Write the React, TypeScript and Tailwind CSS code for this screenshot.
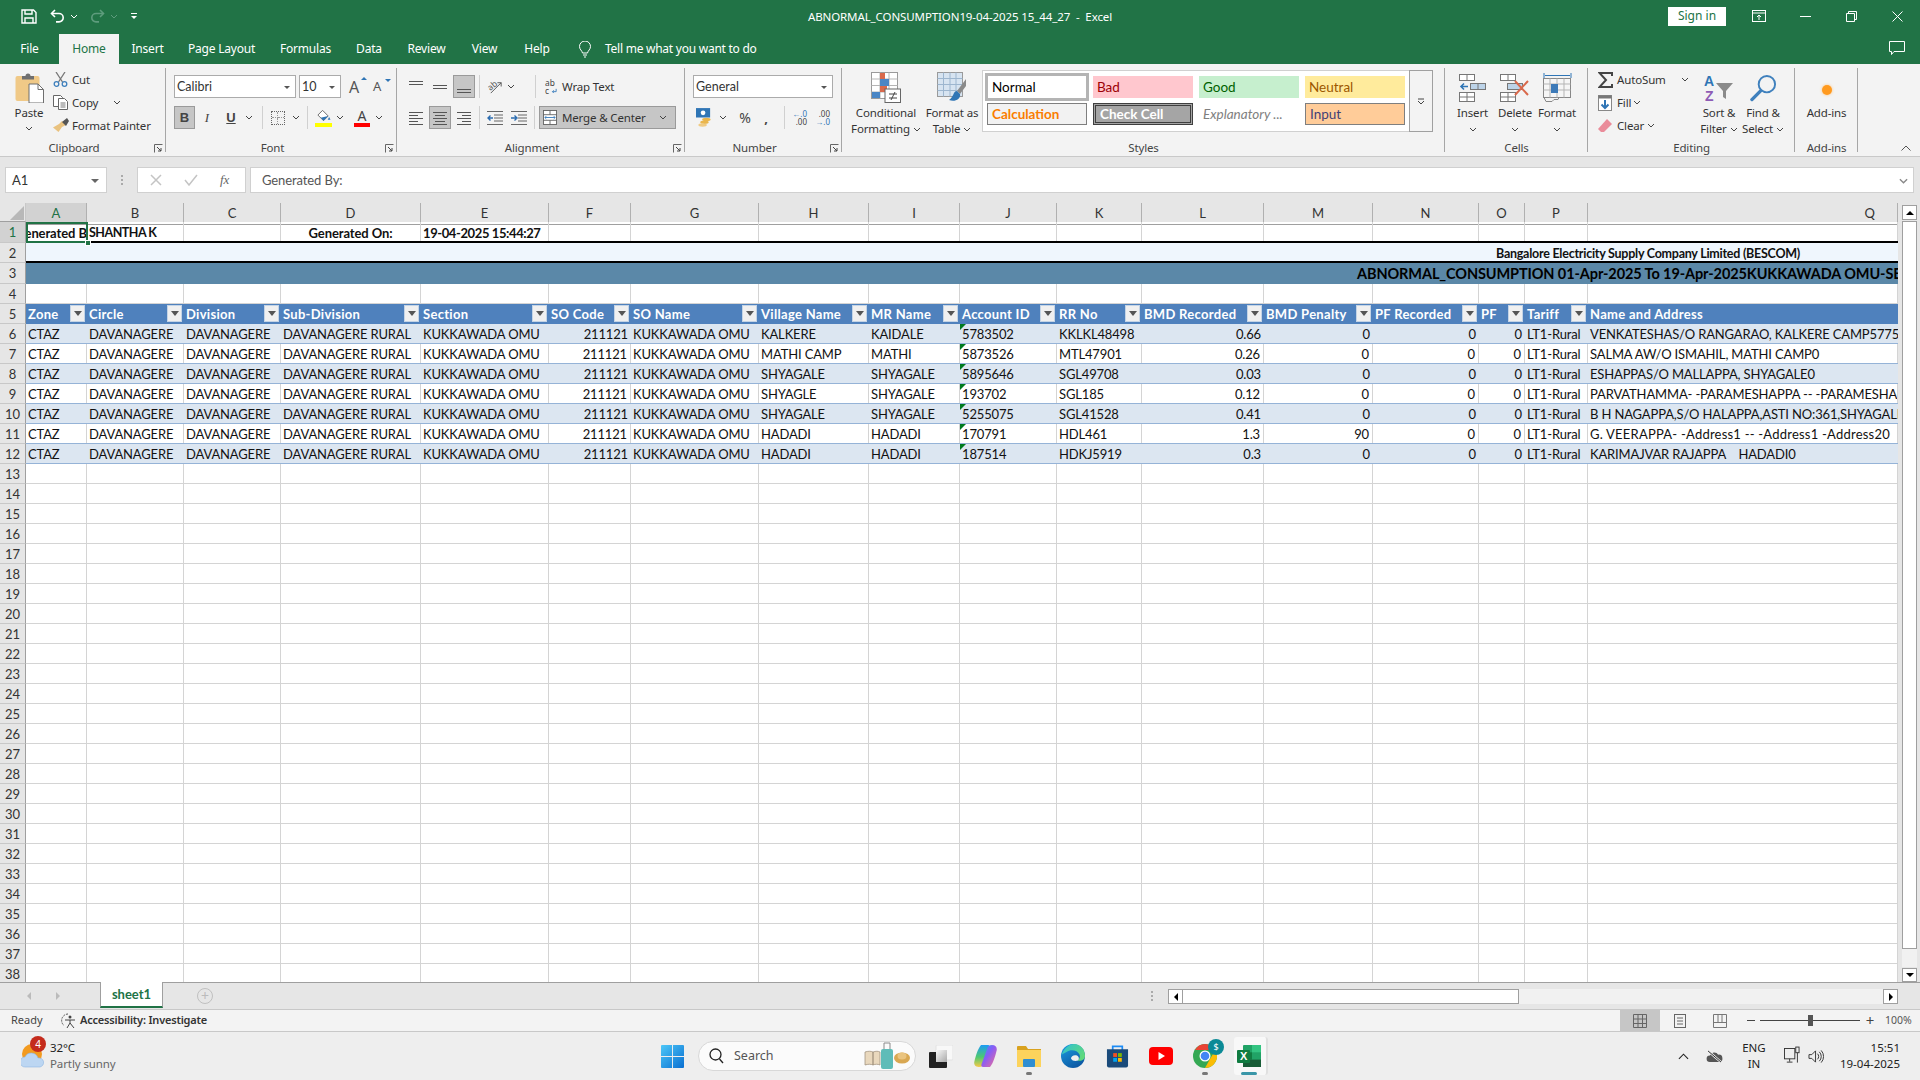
import React from "react";

const colW = "grid-cols-[61px_97px_97px_140px_128px_82px_128px_110px_91px_97px_85px_122px_109px_106px_46px_63px_310px]";
const letters = "ABCDEFGHIJKLMNOPQ".split("");
const heads = ["Zone","Circle","Division","Sub-Division","Section","SO Code","SO Name","Village Name","MR Name","Account ID","RR No","BMD Recorded","BMD Penalty","PF Recorded","PF","Tariff","Name and Address"];
const rightCols = [5, 11, 12, 13, 14];
const base = ["CTAZ","DAVANAGERE","DAVANAGERE","DAVANAGERE RURAL","KUKKAWADA OMU","211121","KUKKAWADA OMU"];
const data: string[][] = [
  [...base,"KALKERE","KAIDALE","5783502","KKLKL48498","0.66","0","0","0","LT1-Rural","VENKATESHAS/O RANGARAO, KALKERE CAMP5775"],
  [...base,"MATHI CAMP","MATHI","5873526","MTL47901","0.26","0","0","0","LT1-Rural","SALMA AW/O ISMAHIL, MATHI CAMP0"],
  [...base,"SHYAGALE","SHYAGALE","5895646","SGL49708","0.03","0","0","0","LT1-Rural","ESHAPPAS/O MALLAPPA, SHYAGALE0"],
  [...base,"SHYAGLE","SHYAGALE","193702","SGL185","0.12","0","0","0","LT1-Rural","PARVATHAMMA- -PARAMESHAPPA -- -PARAMESHAPPA"],
  [...base,"SHYAGALE","SHYAGALE","5255075","SGL41528","0.41","0","0","0","LT1-Rural","B H NAGAPPA,S/O HALAPPA,ASTI NO:361,SHYAGALE"],
  [...base,"HADADI","HADADI","170791","HDL461","1.3","90","0","0","LT1-Rural","G. VEERAPPA- -Address1 -- -Address1 -Address20"],
  [...base,"HADADI","HADADI","187514","HDKJ5919","0.3","0","0","0","LT1-Rural","KARIMAJVAR RAJAPPA    HADADI0"],
];
const cellFont = "[font-family:Lato,'Liberation_Sans',sans-serif] text-[13px]";
const uiText = "text-[11.5px] tracking-[-0.15px]";

function Chev({ className = "", color = "#444" }: { className?: string; color?: string }) {
  return (
    <svg viewBox="0 0 8 5" className={"w-[8px] h-[5px] shrink-0 " + className}>
      <path d="M1 1l3 3 3-3" fill="none" stroke={color} strokeWidth="1" />
    </svg>
  );
}
function Launcher() {
  return (
    <svg viewBox="0 0 9 9" className="w-[9px] h-[9px]">
      <path d="M.5 8.500v-8h8" fill="none" stroke="#666" />
      <path d="M3 3l4 4M7 4v3H4" fill="none" stroke="#444" />
    </svg>
  );
}
function Group({ w, label, launcher, children }: { w: string; label: string; launcher?: boolean; children: React.ReactNode }) {
  return (
    <div className={"relative flex flex-col h-full shrink-0 " + w}>
      <div className="h-[73px] shrink-0">{children}</div>
      <div className={"text-center text-[#444] leading-[14px] " + uiText + (launcher ? " pr-[18px]" : "")}>{label}</div>
      {launcher && <div className="absolute right-[3px] top-[76px]"><Launcher /></div>}
      <div className="absolute right-0 top-0 bottom-0 w-px bg-[#a6a6a6]" />
    </div>
  );
}
function Sep({ className = "" }: { className?: string }) {
  return <div className={"w-px h-[23px] bg-[#d0d0d0] shrink-0 " + className} />;
}
function Lines({ kind, className = "" }: { kind: string; className?: string }) {
  const p: Record<string, string> = {
    top: "M2 3.500h14M2 6.500h14",
    mid: "M2 7.500h14M2 10.500h14",
    bot: "M2 11.500h14M2 14.500h14",
    left: "M2 3.500h14M2 6.500h9M2 9.500h14M2 12.500h9M2 15.500h14",
    center: "M2 3.500h14M4 6.500h10M2 9.500h14M4 12.500h10M2 15.500h14",
    right: "M2 3.500h14M7 6.500h9M2 9.500h14M7 12.500h9M2 15.500h14",
  };
  return (
    <svg viewBox="0 0 18 18" className={"w-[18px] h-[18px] " + className}>
      <path d={p[kind]} stroke="#555" fill="none" />
    </svg>
  );
}
function SmallRow({ icon, text, chev, chevClass = "ml-[5px]" }: { icon: React.ReactNode; text: string; chev?: boolean; chevClass?: string }) {
  return (
    <div className="flex items-center h-[23px]">
      <div className="w-[19px] flex justify-start shrink-0">{icon}</div>
      <span className={"text-[#333] whitespace-nowrap " + uiText}>{text}</span>
      {chev && <Chev className={chevClass} />}
    </div>
  );
}
function BigBtn({ w, icon, l1, l2, chev = true }: { w: string; icon: React.ReactNode; l1: string; l2?: string; chev?: boolean }) {
  return (
    <div className={"flex flex-col items-center shrink-0 " + w}>
      <div className="flex items-center justify-center h-[31px]">{icon}</div>
      <div className={"text-[#333] leading-[16px] mt-[2px] whitespace-nowrap " + uiText}>{l1}</div>
      {l2 ? (
        <div className={"flex items-center text-[#333] leading-[16px] whitespace-nowrap " + uiText}>{l2}{chev && <Chev className="ml-[3px]" />}</div>
      ) : chev ? (
        <div className="h-[16px] flex items-center"><Chev /></div>
      ) : null}
    </div>
  );
}
function Tab({ w, text, active }: { w: string; text: string; active?: boolean }) {
  return (
    <div className={"h-[30px] flex items-center justify-center text-[12px] tracking-[-0.2px] shrink-0 " + w + (active ? " bg-[#f3f3f3] text-[#217346]" : " text-white")}>
      {text}
    </div>
  );
}
function StyleBox({ className, text }: { className: string; text: string }) {
  return <div className={"flex items-center pl-[4px] text-[13.5px] [font-family:Lato,sans-serif] shrink-0 " + className}>{text}</div>;
}
function RowHead({ n, active }: { n: number; active?: boolean }) {
  return (
    <div className={"w-[26px] h-full shrink-0 flex items-center justify-center pt-[2px] border-r border-r-[#9f9f9f] border-b border-b-[#c8c8c8] [font-family:Lato,sans-serif] text-[13px] " + (active ? "bg-[#d2d2d2] text-[#217346]" : "bg-[#e6e6e6] text-[#333]")}>{n}</div>
  );
}
function EmptyCells() {
  return (
    <div className={"grid w-[1872px] h-full " + colW}>
      {letters.map((l) => <div key={l} className="border-r border-b border-[#d4d4d4] h-full" />)}
    </div>
  );
}

/* ---- Icons ---- */
const SaveIcon = () => (
  <svg viewBox="0 0 16 15" className="w-[16px] h-[15px]">
    <path d="M1 1h11.500L15 3.500V14H1z" fill="none" stroke="#fff" strokeWidth="1.400" />
    <path d="M4 1v4h7V1M4 14V9h8v5" fill="none" stroke="#fff" strokeWidth="1.400" />
  </svg>
);
const UndoIcon = () => (
  <svg viewBox="0 0 16 14" className="w-[16px] h-[14px]">
    <path d="M5 1L1.500 4.500 5 8" fill="none" stroke="#fff" strokeWidth="1.600" />
    <path d="M2 4.500h7a4.200 4.200 0 010 8.400H6" fill="none" stroke="#fff" strokeWidth="1.600" />
  </svg>
);
const RedoIcon = () => (
  <svg viewBox="0 0 16 14" className="w-[16px] h-[14px]">
    <path d="M11 1l3.500 3.500L11 8" fill="none" stroke="#5e9c7d" strokeWidth="1.600" />
    <path d="M14 4.500H7a4.200 4.200 0 000 8.400h3" fill="none" stroke="#5e9c7d" strokeWidth="1.600" />
  </svg>
);
const PasteIcon = () => (
  <svg viewBox="0 0 29 31" className="w-[29px] h-[31px]">
    <rect x="0.500" y="4" width="24" height="25" rx="2" fill="#f0c987" />
    <path d="M7 4h3.500a2.500 2.500 0 015 0H19v3.500H7z" fill="#6f6f6f" />
    <path d="M14 12h9l5.500 5.500V31H14z" fill="#fff" stroke="#6f6f6f" />
    <path d="M23 12v5.500h5.500" fill="none" stroke="#6f6f6f" />
  </svg>
);
const Scissors = () => (
  <svg viewBox="0 0 15 15" className="w-[15px] h-[15px]">
    <path d="M3 0l6.500 10M12 0L5.500 10" stroke="#777" strokeWidth="1.300" fill="none" />
    <circle cx="3.500" cy="12" r="2.300" fill="none" stroke="#3f80bd" strokeWidth="1.300" />
    <circle cx="11.500" cy="12" r="2.300" fill="none" stroke="#3f80bd" strokeWidth="1.300" />
  </svg>
);
const CopyIcon = () => (
  <svg viewBox="0 0 15 15" className="w-[15px] h-[15px]">
    <path d="M.5.500h7l2 2v9h-9z" fill="#fff" stroke="#666" />
    <path d="M5.500 3.500h6l3 3v8h-9z" fill="#fff" stroke="#666" />
    <path d="M7.500 8h5M7.500 10h5M7.500 12h5" stroke="#777" />
  </svg>
);
const Painter = () => (
  <svg viewBox="0 0 16 15" className="w-[16px] h-[15px]">
    <path d="M9 3l4 4-4 2-3.500 5L0 9.500 6 6z" fill="#e9c27f" />
    <path d="M9 4l4 4 3-5-2-3z" fill="#555" />
  </svg>
);
const OrientIcon = () => (
  <svg viewBox="0 0 18 18" className="w-[17px] h-[17px]">
    <text x="1" y="11" fontSize="9" fill="#555" transform="rotate(-40 6 9)">ab</text>
    <path d="M4 16L15 5M15 5h-4M15 5v4" stroke="#555" fill="none" />
  </svg>
);
const WrapIcon = () => (
  <svg viewBox="0 0 14 18" className="w-[13px] h-[18px]">
    <text x="0" y="8" fontSize="9" fill="#444">ab</text>
    <text x="0" y="17" fontSize="9" fill="#444">c</text>
    <path d="M12 11v3H8M9.500 12.500L8 14l1.500 1.500" stroke="#3f80bd" fill="none" />
  </svg>
);
const MergeIcon = () => (
  <svg viewBox="0 0 15 16" className="w-[14px] h-[15px]">
    <rect x=".5" y=".5" width="14" height="15" fill="#fff" stroke="#666" />
    <path d="M0 5h15M0 11h15M7.500 0v5M7.500 11v5" stroke="#666" />
    <path d="M2 8h11M3.500 6.500L2 8l1.500 1.500M11.500 6.500L13 8l-1.500 1.500" stroke="#3f80bd" fill="none" />
  </svg>
);
const IndentIcon = ({ flip }: { flip?: boolean }) => (
  <svg viewBox="0 0 16 16" className="w-[16px] h-[16px]">
    <path d="M0 1.500h16M7 5h9M7 8h9M7 11h9M0 14.500h16" stroke="#666" fill="none" />
    {flip ? <path d="M0 8h5M3.500 5.500L6 8l-2.500 2.500" stroke="#2b6cb0" strokeWidth="1.400" fill="none" /> : <path d="M1 8h5M3.500 5.500L1 8l2.500 2.500" stroke="#2b6cb0" strokeWidth="1.400" fill="none" />}
  </svg>
);
const CurrencyIcon = () => (
  <svg viewBox="0 0 17 20" className="w-[16px] h-[19px]">
    <rect x="0" y="0" width="15" height="10" fill="#2f75b5" />
    <circle cx="7.500" cy="5" r="2.500" fill="#fff" />
    <ellipse cx="11" cy="12" rx="4.500" ry="1.800" fill="#eab64d" />
    <ellipse cx="9" cy="15" rx="4.500" ry="1.800" fill="#eab64d" />
    <ellipse cx="7" cy="18" rx="4.500" ry="1.800" fill="#f0cb83" />
  </svg>
);
const CFIcon = () => (
  <svg viewBox="0 0 30 31" className="w-[30px] h-[31px]">
    <rect x=".5" y=".5" width="26" height="26" fill="#fff" stroke="#9a9a9a" />
    <path d="M9 .5v26M18 .5v26M.5 7h26M.5 13.500h26M.5 20h26" stroke="#b5b5b5" />
    <rect x="9" y="1" width="5" height="6" fill="#d9694b" />
    <rect x="9" y="7" width="9" height="7" fill="#4a86c5" />
    <rect x="9" y="14" width="7" height="6" fill="#d9694b" />
    <rect x="1" y="20" width="8" height="6" fill="#4a86c5" />
    <rect x="14" y="17" width="15.500" height="13.500" fill="#fff" stroke="#666" />
    <path d="M18 22h8M18 26h8M24 20l-4 8" stroke="#444" fill="none" />
  </svg>
);
const FTIcon = () => (
  <svg viewBox="0 0 30 31" className="w-[30px] h-[31px]">
    <rect x=".5" y=".5" width="25" height="24" fill="#d7e4f1" stroke="#9a9a9a" />
    <path d="M6.500 .5v24M13 .5v24M19 .5v24M.5 6.500h25M.5 12.500h25M.5 18.500h25" stroke="#9db6cf" />
    <path d="M29 7l-9 12 3 3 6-8z" fill="#8a8a8a" />
    <path d="M20 19c-4 0-3 6-8 9 5 2 12 0 11-6z" fill="#2f75b5" />
  </svg>
);
const InsertIcon = () => (
  <svg viewBox="0 0 27 28" className="w-[27px] h-[28px]">
    <rect x=".5" y=".5" width="15" height="6" fill="#fff" stroke="#777" />
    <path d="M8 .5v6" stroke="#777" />
    <rect x="11.500" y="9.500" width="15" height="6" fill="#bcd3e8" stroke="#777" />
    <path d="M19 9.500v6" stroke="#777" />
    <path d="M2 12.500h7M5 9.500l-3 3 3 3" stroke="#2f75b5" strokeWidth="1.600" fill="none" />
    <rect x=".5" y="18.500" width="15" height="9" fill="#fff" stroke="#777" />
    <path d="M8 18.500v9M.5 23h15" stroke="#777" />
  </svg>
);
const DeleteIcon = () => (
  <svg viewBox="0 0 30 28" className="w-[30px] h-[28px]">
    <rect x=".5" y=".5" width="15" height="6" fill="#fff" stroke="#777" />
    <path d="M8 .5v6" stroke="#777" />
    <rect x="7.500" y="9.500" width="15" height="6" fill="#bcd3e8" stroke="#777" />
    <rect x=".5" y="18.500" width="15" height="9" fill="#fff" stroke="#777" />
    <path d="M8 18.500v9M.5 23h15" stroke="#777" />
    <path d="M15 7l13 14M28 7L15 21" stroke="#d9694b" strokeWidth="2" fill="none" />
  </svg>
);
const FormatIcon = () => (
  <svg viewBox="0 0 29 31" className="w-[29px] h-[31px]">
    <path d="M1 1v5M28 1v5M2 3.500h25" stroke="#2f75b5" fill="none" />
    <rect x=".5" y="6.500" width="27" height="19" fill="#f6f6f6" stroke="#888" />
    <path d="M7 6.500v19M14 6.500v19M21 6.500v19M.5 12h27M.5 18h27" stroke="#b5b5b5" />
    <rect x="8" y="12" width="7" height="9" fill="#3d7ab8" />
    <path d="M1 25.500l2 4h6l2-2h4l1-2" fill="none" stroke="#888" />
  </svg>
);
const Sigma = () => (
  <svg viewBox="0 0 15 16" className="w-[15px] h-[16px]">
    <path d="M14 4V1H1.500L8 8l-6.500 7H14v-3" fill="none" stroke="#444" strokeWidth="2" />
  </svg>
);
const FillIcon = () => (
  <svg viewBox="0 0 14 16" className="w-[14px] h-[16px]">
    <rect x=".5" y=".5" width="13" height="15" fill="#fff" stroke="#888" />
    <rect x=".5" y=".5" width="13" height="3" fill="#777" />
    <path d="M7 5v8M3.500 9.500L7 13l3.500-3.500" stroke="#2f75b5" strokeWidth="2" fill="none" />
  </svg>
);
const Eraser = () => (
  <svg viewBox="0 0 14 14" className="w-[14px] h-[14px]">
    <path d="M9 0l5 5-8 8H3L0 10z" fill="#ea8c9a" />
  </svg>
);
const SortIcon = () => (
  <svg viewBox="0 0 30 28" className="w-[30px] h-[28px]">
    <text x="0" y="12" fontSize="14" fontWeight="700" fill="#2f75b5" fontFamily="Liberation Sans">A</text>
    <text x="1" y="27" fontSize="14" fontWeight="700" fill="#8e5bb5" fontFamily="Liberation Sans">Z</text>
    <path d="M12 9h17l-7 8v8l-3-2v-6z" fill="#8a8a8a" />
  </svg>
);
const FindIcon = () => (
  <svg viewBox="0 0 28 28" className="w-[27px] h-[28px]">
    <circle cx="17.500" cy="10" r="8.500" fill="none" stroke="#3f80bd" strokeWidth="2" />
    <path d="M11 17L2 26" stroke="#3f80bd" strokeWidth="3.500" strokeLinecap="round" />
  </svg>
);
const WinLogo = () => (
  <svg viewBox="0 0 24 24" className="w-[23px] h-[23px]">
    <defs>
      <linearGradient id="w1" x1="0" y1="0" x2="1" y2="1"><stop offset="0" stopColor="#4cc7f8" /><stop offset="1" stopColor="#0a6fd1" /></linearGradient>
    </defs>
    <path d="M0 1a1 1 0 011-1h10.500v11.500H0zM12.500 0H23a1 1 0 011 1v10.500H12.500zM0 12.500h11.500V24H1a1 1 0 01-1-1zM12.500 12.500H24V23a1 1 0 01-1 1H12.500z" fill="url(#w1)" />
  </svg>
);

function TaskIcon({ children, dot, active }: { children: React.ReactNode; dot?: boolean; active?: boolean }) {
  return (
    <div className="relative w-[44px] h-[38px] flex items-center justify-center shrink-0">
      {children}
      {dot && <div className="absolute bottom-0 left-1/2 -translate-x-1/2 w-[6px] h-[3px] rounded-full bg-[#777]" />}
      {active && <div className="absolute bottom-0 left-1/2 -translate-x-1/2 w-[16px] h-[3px] rounded-full bg-[#3a96a8]" />}
    </div>
  );
}
const Tri = () => <div className="w-0 h-0 border-l-[3px] border-r-[3px] border-t-[3px] border-l-transparent border-r-transparent border-t-[#555]" />;

export default function App() {
  return (
    <div className="w-[1920px] h-[1080px] overflow-hidden flex flex-col bg-white [font-family:'Noto_Sans',sans-serif]">
      {/* Title bar */}
      <div className="h-[32px] bg-[#217346] grid grid-cols-[1fr_auto_1fr] items-center text-white shrink-0">
        <div className="flex items-center pl-[21px]">
          <SaveIcon />
          <div className="ml-[13px]"><UndoIcon /></div>
          <Chev className="ml-[4px]" color="#fff" />
          <div className="ml-[11px]"><RedoIcon /></div>
          <Chev className="ml-[5px]" color="#5e9c7d" />
          <div className="ml-[13px] flex flex-col items-center gap-[2px]">
            <div className="w-[6px] h-px bg-white" />
            <div className="w-0 h-0 border-l-[3px] border-r-[3px] border-t-[3px] border-l-transparent border-r-transparent border-t-white" />
          </div>
        </div>
        <div className="text-[11.5px] tracking-[-0.1px] whitespace-nowrap pt-[2px]">ABNORMAL_CONSUMPTION19-04-2025 15_44_27&nbsp; -&nbsp; Excel</div>
        <div className="flex items-center justify-end h-full">
          <div className="w-[58px] h-[19px] bg-white text-[#217346] text-[12px] flex items-center justify-center mr-[10px]">Sign in</div>
          <div className="w-[46px] flex justify-center">
            <svg viewBox="0 0 14 12" className="w-[14px] h-[12px]"><rect x=".5" y=".5" width="13" height="11" fill="none" stroke="#fff" /><path d="M0 3h14M7 10V5M5 7l2-2 2 2" stroke="#fff" fill="none" /></svg>
          </div>
          <div className="w-[46px] flex justify-center"><div className="w-[11px] h-px bg-white" /></div>
          <div className="w-[46px] flex justify-center">
            <svg viewBox="0 0 11 11" className="w-[11px] h-[11px]"><path d="M.5 2.500h8v8h-8zM2.500 2.500v-2h8v8h-2" fill="none" stroke="#fff" /></svg>
          </div>
          <div className="w-[46px] flex justify-center">
            <svg viewBox="0 0 11 11" className="w-[11px] h-[11px]"><path d="M.5.500l10 10M10.500.500l-10 10" stroke="#fff" /></svg>
          </div>
        </div>
      </div>
      {/* Tabs */}
      <div className="h-[32px] bg-[#217346] flex items-end shrink-0">
        <Tab w="w-[59px]" text="File" />
        <Tab w="w-[60px]" text="Home" active />
        <Tab w="w-[57px]" text="Insert" />
        <Tab w="w-[91px]" text="Page Layout" />
        <Tab w="w-[77px]" text="Formulas" />
        <Tab w="w-[50px]" text="Data" />
        <Tab w="w-[65px]" text="Review" />
        <Tab w="w-[51px]" text="View" />
        <Tab w="w-[54px]" text="Help" />
        <div className="h-[30px] flex items-center ml-[15px] text-white">
          <svg viewBox="0 0 12 17" className="w-[12px] h-[17px]"><path d="M3.500 12C3 9.500.5 8.500.5 5.500a5.500 5.500 0 0111 0c0 3-2.500 4-3 6.500zM4 14h4M5 16h2" fill="none" stroke="#fff" /></svg>
          <span className="ml-[14px] text-[12px] tracking-[-0.25px]">Tell me what you want to do</span>
        </div>
        <div className="ml-auto mr-[15px] mb-[9px]">
          <svg viewBox="0 0 16 14" className="w-[16px] h-[14px]"><path d="M.5.500h15v10H5l-2.500 3v-3h-2z" fill="none" stroke="#fff" /></svg>
        </div>
      </div>
      {/* Ribbon */}
      <div className="h-[93px] bg-[#f3f3f3] border-b border-b-[#c9c9c9] flex pt-[4px] pb-[4px] shrink-0">
        <Group w="w-[166px]" label="Clipboard" launcher>
          <div className="flex pl-[14px]">
            <div className="w-[30px] flex flex-col items-center pt-[4px]">
              <PasteIcon />
              <div className={"text-[#333] leading-[16px] mt-[2px] " + uiText}>Paste</div>
              <Chev className="mt-[5px]" />
            </div>
            <div className="ml-[9px] flex flex-col">
              <SmallRow icon={<Scissors />} text="Cut" />
              <SmallRow icon={<CopyIcon />} text="Copy" chev chevClass="ml-[15px]" />
              <SmallRow icon={<Painter />} text="Format Painter" />
            </div>
          </div>
        </Group>
        <Group w="w-[231px]" label="Font" launcher>
          <div className="flex flex-col pl-[8px] pt-[7px]">
            <div className="flex items-center h-[23px]">
              <div className="w-[122px] h-[23px] bg-white border border-[#ababab] flex items-center justify-between pl-[2px] pr-[5px] pt-[1px] text-[12.5px] text-[#333] [font-family:Lato,sans-serif]">
                Calibri<Tri />
              </div>
              <div className="ml-[3px] w-[42px] h-[23px] bg-white border border-[#ababab] flex items-center justify-between pl-[2px] pr-[5px] pt-[1px] text-[12.5px] text-[#333] [font-family:Lato,sans-serif]">
                10<Tri />
              </div>
              <div className="ml-[8px] w-[16px] text-[16px] text-[#555] relative">A<div className="absolute right-[-2px] top-[2px] w-0 h-0 border-l-[3px] border-r-[3px] border-b-[3px] border-l-transparent border-r-transparent border-b-[#2f75b5]" /></div>
              <div className="ml-[8px] w-[16px] text-[13px] text-[#555] relative">A<div className="absolute right-[-2px] top-[2px] w-0 h-0 border-l-[3px] border-r-[3px] border-t-[3px] border-l-transparent border-r-transparent border-t-[#2f75b5]" /></div>
            </div>
            <div className="flex items-center h-[23px] mt-[8px]">
              <div className="w-[21px] h-[23px] bg-[#c6c6c6] border border-[#9a9a9a] flex items-center justify-center font-bold text-[13px] text-[#444] [font-family:'Liberation_Sans',sans-serif]">B</div>
              <div className="w-[24px] text-center italic text-[13px] text-[#444] [font-family:'Liberation_Serif',serif]">I</div>
              <div className="w-[24px] text-center underline font-bold text-[13px] text-[#444] [font-family:'Liberation_Sans',sans-serif]">U</div>
              <Chev className="ml-[2px]" />
              <Sep className="ml-[9px]" />
              <div className="ml-[8px] w-[14px] h-[14px] border border-dotted border-[#666] grid grid-cols-2 grid-rows-2">
                <div className="border-r border-b border-dotted border-[#999]" /><div className="border-b border-dotted border-[#999]" /><div className="border-r border-dotted border-[#999]" /><div />
              </div>
              <Chev className="ml-[7px]" />
              <Sep className="ml-[7px]" />
              <div className="ml-[7px] w-[17px] flex flex-col items-center">
                <svg viewBox="0 0 16 13" className="w-[15px] h-[13px]"><path d="M7 1l6 6-5 5-6-6z" fill="#fff" stroke="#666" /><path d="M13 7l-5 5-3-3z" fill="#2f75b5" /><path d="M14 8l1.500 3h-3z" fill="#2f75b5" /></svg>
                <div className="w-[17px] h-[4px] bg-[#ffff00] mt-[1px]" />
              </div>
              <Chev className="ml-[4px]" />
              <div className="ml-[10px] w-[16px] flex flex-col items-center">
                <span className="text-[14px] leading-[14px] text-[#444]">A</span>
                <div className="w-[16px] h-[4px] bg-[#ff0000]" />
              </div>
              <Chev className="ml-[5px]" />
            </div>
          </div>
        </Group>
        <Group w="w-[288px]" label="Alignment" launcher>
          <div className="flex flex-col pl-[8px] pt-[7px]">
            <div className="flex items-center h-[23px]">
              <div className="w-[22px] h-[23px] flex items-center justify-center"><Lines kind="top" /></div>
              <div className="ml-[2px] w-[22px] h-[23px] flex items-center justify-center"><Lines kind="mid" /></div>
              <div className="ml-[2px] w-[22px] h-[23px] bg-[#c6c6c6] border border-[#9a9a9a] flex items-center justify-center"><Lines kind="bot" /></div>
              <Sep className="ml-[4px]" />
              <div className="ml-[7px]"><OrientIcon /></div>
              <Chev className="ml-[3px]" />
              <Sep className="ml-[20px]" />
              <div className="ml-[9px]"><WrapIcon /></div>
              <span className={"ml-[4px] text-[#333] " + uiText}>Wrap Text</span>
            </div>
            <div className="flex items-center h-[23px] mt-[8px]">
              <div className="w-[22px] h-[23px] flex items-center justify-center"><Lines kind="left" /></div>
              <div className="ml-[2px] w-[22px] h-[23px] bg-[#c6c6c6] border border-[#9a9a9a] flex items-center justify-center"><Lines kind="center" /></div>
              <div className="ml-[2px] w-[22px] h-[23px] flex items-center justify-center"><Lines kind="right" /></div>
              <Sep className="ml-[4px]" />
              <div className="ml-[7px]"><IndentIcon /></div>
              <div className="ml-[8px]"><IndentIcon flip /></div>
              <Sep className="ml-[7px]" />
              <div className="ml-[4px] w-[137px] h-[23px] bg-[#c6c6c6] border border-[#9a9a9a] flex items-center pl-[3px]">
                <MergeIcon />
                <span className={"ml-[5px] text-[#333] " + uiText}>Merge &amp; Center</span>
                <Chev className="ml-[13px]" />
              </div>
            </div>
          </div>
        </Group>
        <Group w="w-[157px]" label="Number" launcher>
          <div className="flex flex-col pl-[8px] pt-[7px]">
            <div className="w-[140px] h-[23px] bg-white border border-[#ababab] flex items-center justify-between pl-[2px] pr-[5px] pt-[1px] text-[12.5px] text-[#333] [font-family:Lato,sans-serif]">
              General<Tri />
            </div>
            <div className="flex items-center h-[23px] mt-[8px] pl-[3px]">
              <CurrencyIcon />
              <Chev className="ml-[7px]" />
              <div className="ml-[10px] w-[16px] text-[14px] text-[#444] text-center">%</div>
              <div className="ml-[9px] w-[8px] text-[13px] font-bold text-[#444] text-center leading-[10px]">,</div>
              <Sep className="ml-[14px]" />
              <div className="ml-[7px] text-[8px] leading-[8px] text-[#444] w-[15px] text-right"><div className="text-[#2f75b5]">←.0</div><div>.00</div></div>
              <div className="ml-[8px] text-[8px] leading-[8px] text-[#444] w-[15px] text-right"><div>.00</div><div className="text-[#2f75b5]">→.0</div></div>
            </div>
          </div>
        </Group>
        <Group w="w-[603px]" label="Styles">
          <div className="flex">
            <div className="flex pl-[14px] gap-[6px] pt-[4px]">
              <BigBtn w="w-[60px]" icon={<CFIcon />} l1="Conditional" l2="Formatting" />
              <BigBtn w="w-[60px]" icon={<FTIcon />} l1="Format as" l2="Table" />
            </div>
            <div className="mt-[2px] w-[427px] h-[62px] bg-white border border-[#d0d0d0] border-r-0 flex flex-col shrink-0">
              <div className="flex items-center pl-[2px] mt-[2px]">
                <StyleBox className="w-[104px] h-[28px] bg-white border-[3px] border-[#b4b4b4] text-black" text="Normal" />
                <StyleBox className="ml-[4px] w-[100px] h-[22px] bg-[#ffc7ce] text-[#9c0006]" text="Bad" />
                <StyleBox className="ml-[6px] w-[100px] h-[22px] bg-[#c6efce] text-[#006100]" text="Good" />
                <StyleBox className="ml-[6px] w-[100px] h-[22px] bg-[#ffeb9c] text-[#9c5700]" text="Neutral" />
              </div>
              <div className="flex items-center pl-[4px] mt-[2px]">
                <StyleBox className="w-[100px] h-[22px] bg-[#f2f2f2] border border-[#7f7f7f] text-[#fa7d00] font-bold" text="Calculation" />
                <StyleBox className="ml-[6px] w-[100px] h-[22px] bg-[#a5a5a5] border-[3px] border-double border-[#3f3f3f] text-white font-bold" text="Check Cell" />
                <StyleBox className="ml-[6px] w-[100px] h-[22px] bg-white text-[#7f7f7f] italic" text="Explanatory ..." />
                <StyleBox className="ml-[6px] w-[100px] h-[22px] bg-[#ffcc99] border border-[#7f7f7f] text-[#3f3f76]" text="Input" />
              </div>
            </div>
            <div className="mt-[2px] w-[24px] h-[62px] bg-[#f3f3f3] border border-[#a0a0a0] flex items-center justify-center shrink-0">
              <svg viewBox="0 0 8 7" className="w-[8px] h-[7px]"><path d="M1 1h6M1 3l3 3 3-3" fill="none" stroke="#444" /></svg>
            </div>
          </div>
        </Group>
        <Group w="w-[143px]" label="Cells">
          <div className="flex pl-[6px] pt-[4px]">
            <BigBtn w="w-[43px]" icon={<InsertIcon />} l1="Insert" />
            <BigBtn w="w-[42px]" icon={<DeleteIcon />} l1="Delete" />
            <BigBtn w="w-[42px]" icon={<FormatIcon />} l1="Format" />
          </div>
        </Group>
        <Group w="w-[207px]" label="Editing">
          <div className="flex pl-[10px]">
            <div className="w-[99px] flex flex-col">
              <SmallRow icon={<Sigma />} text="AutoSum" chev chevClass="ml-[15px]" />
              <SmallRow icon={<FillIcon />} text="Fill" chev chevClass="ml-[2px]" />
              <SmallRow icon={<Eraser />} text="Clear" chev chevClass="ml-[3px]" />
            </div>
            <div className="pt-[4px] flex">
              <BigBtn w="w-[44px]" icon={<SortIcon />} l1="Sort &amp;" l2="Filter" />
              <BigBtn w="w-[44px]" icon={<FindIcon />} l1="Find &amp;" l2="Select" />
            </div>
          </div>
        </Group>
        <Group w="w-[63px]" label="Add-ins">
          <div className="pt-[4px]">
            <BigBtn w="w-full" icon={<div className="w-[10px] h-[10px] rounded-full bg-[#ff9a1f] shadow-[0_0_3px_#ffc27a] mt-[5px]" />} l1="Add-ins" chev={false} />
          </div>
        </Group>
        <div className="flex-1 flex items-end justify-end pr-[9px] pb-[1px]">
          <svg viewBox="0 0 10 6" className="w-[10px] h-[6px]"><path d="M.5 5.500L5 1l4.500 4.500" fill="none" stroke="#555" /></svg>
        </div>
      </div>
      {/* Formula bar */}
      <div className="h-[46px] bg-[#e6e6e6] flex items-start pt-[10px] pl-[5px] shrink-0">
        <div className="w-[102px] h-[26px] bg-white border border-[#d0d0d0] flex items-center justify-between pl-[6px] pr-[7px] pt-[1px] text-[13px] text-[#333] [font-family:Lato,sans-serif]">
          A1<div className="w-0 h-0 border-l-[4px] border-r-[4px] border-t-[4px] border-l-transparent border-r-transparent border-t-[#666]" />
        </div>
        <div className="w-[30px] h-[26px] flex flex-col items-center justify-center gap-[2px]">
          <div className="w-[2px] h-[2px] bg-[#aaa]" /><div className="w-[2px] h-[2px] bg-[#aaa]" /><div className="w-[2px] h-[2px] bg-[#aaa]" />
        </div>
        <div className="w-[109px] h-[26px] bg-white border border-[#d0d0d0] flex items-center pl-[12px] gap-[22px]">
          <svg viewBox="0 0 12 12" className="w-[12px] h-[12px]"><path d="M1 1l10 10M11 1L1 11" stroke="#c4c4c4" strokeWidth="1.500" /></svg>
          <svg viewBox="0 0 14 12" className="w-[14px] h-[12px]"><path d="M1 6l4 5 8-10" stroke="#c4c4c4" strokeWidth="1.500" fill="none" /></svg>
          <span className="italic text-[13px] text-[#666] [font-family:'Liberation_Serif',serif]">fx</span>
        </div>
        <div className="ml-[4px] w-[1664px] h-[26px] bg-white border border-[#d0d0d0] flex items-center justify-between pl-[11px] pr-[5px] pt-[1px] text-[13px] text-[#555] [font-family:Lato,sans-serif] tracking-[-0.1px]">
          Generated By:
          <svg viewBox="0 0 10 6" className="w-[9px] h-[6px]"><path d="M1 1l4 4 4-4" fill="none" stroke="#888" strokeWidth="1.500" /></svg>
        </div>
      </div>
      {/* Sheet */}
      <div className="h-[780px] shrink-0 flex bg-[#e6e6e6] border-b border-b-[#9f9f9f]">
        <div className="w-[1898px] shrink-0 flex flex-col overflow-hidden bg-white">
          <div className="flex h-[19px] shrink-0 bg-[#e6e6e6]">
            <div className="w-[26px] h-full flex items-end justify-end pr-[1px] pb-[1px] border-r border-r-[#c8c8c8] border-b border-b-[#9f9f9f]">
              <svg viewBox="0 0 14 14" className="w-[14px] h-[14px]"><path d="M14 0v14H0z" fill="#b8b8b8" /></svg>
            </div>
            <div className={"grid w-[1872px] " + colW}>
              {letters.map((l, i) => (
                <div key={l} className={"flex items-center pt-[1px] border-r border-r-[#b0b0b0] border-b border-b-[#9f9f9f] [font-family:Lato,sans-serif] text-[13px] " + (l === "Q" ? "justify-end pr-[22px] " : "justify-center ") + (i === 0 ? "bg-[#d2d2d2] text-[#217346]" : "text-[#333]")}>{l}</div>
              ))}
            </div>
          </div>
          {/* Row 1 */}
          <div className="flex h-[21px] shrink-0">
            <RowHead n={1} active />
            <div className={"grid w-[1872px] border-b-[2px] border-b-black relative font-bold text-[#111] " + colW + " " + cellFont}>
              {letters.map((l, i) => (
                <div key={l} className={"border-r border-[#d4d4d4] flex items-center pt-[4px] whitespace-nowrap overflow-hidden " + (i === 0 || i === 3 ? "justify-center tracking-[-0.1px]" : "pl-[2px]")}>
                  {i === 0 && <span className="shrink-0">Generated By:</span>}
                  {i === 1 && <span className="text-[12.5px] tracking-[-0.5px]">SHANTHA K</span>}
                  {i === 3 && "Generated On:"}
                  {i === 4 && <span className="tracking-[-0.4px]">19-04-2025 15:44:27</span>}
                </div>
              ))}
              <div className="absolute left-0 top-0 w-[62px] h-[21px] border-2 border-[#217346] pointer-events-none" />
              <div className="absolute left-[59px] top-[18px] w-[6px] h-[6px] bg-[#217346] border border-white" />
            </div>
          </div>
          {/* Row 2 */}
          <div className="flex h-[20px] shrink-0">
            <RowHead n={2} />
            <div className="w-[1872px] bg-[#eff6fd] border-b-[2px] border-b-black flex items-center pt-[4px] pl-[1470px] font-bold text-[12.5px] whitespace-nowrap overflow-hidden [font-family:Lato,sans-serif] tracking-[-0.25px] text-[#111]">
              Bangalore Electricity Supply Company Limited (BESCOM)
            </div>
          </div>
          {/* Row 3 */}
          <div className="flex h-[21px] shrink-0">
            <RowHead n={3} />
            <div className="w-[1872px] bg-[#5b88a8] flex items-center pl-[1331px] font-bold text-[14.5px] whitespace-nowrap overflow-hidden text-black [font-family:Lato,sans-serif] tracking-[-0.1px]">
              ABNORMAL_CONSUMPTION 01-Apr-2025 To 19-Apr-2025KUKKAWADA OMU-SECTION
            </div>
          </div>
          {/* Row 4 */}
          <div className="flex h-[20px] shrink-0">
            <RowHead n={4} />
            <EmptyCells />
          </div>
          {/* Row 5 */}
          <div className="flex h-[20px] shrink-0">
            <RowHead n={5} />
            <div className={"grid w-[1872px] bg-[#4f81bd] text-white font-bold tracking-[0.3px] " + colW + " " + cellFont}>
              {heads.map((t, i) => (
                <div key={t} className="relative flex items-center pt-[2px] pl-[2px] whitespace-nowrap overflow-hidden">
                  {t}
                  {i < 16 && (
                    <div className="absolute right-[2px] top-[1px] w-[15px] h-[17px] bg-[#f0f0f0] border border-[#c4d4e6] flex items-center justify-center">
                      <div className="w-0 h-0 border-l-[4px] border-r-[4px] border-t-[5px] border-l-transparent border-r-transparent border-t-[#555]" />
                    </div>
                  )}
                </div>
              ))}
            </div>
          </div>
          {/* Data rows */}
          {data.map((row, r) => (
            <div key={r} className="flex h-[20px] shrink-0">
              <RowHead n={r + 6} />
              <div className={"grid w-[1872px] border-b border-b-[#95b3d7] text-[#111] tracking-[-0.15px] " + colW + " " + cellFont + (r % 2 === 0 ? " bg-[#dce6f1]" : " bg-white")}>
                {row.map((t, i) => (
                  <div key={i} className={"relative flex items-center pt-[2px] whitespace-pre overflow-hidden " + (rightCols.includes(i) ? "justify-end pr-[3px]" : "pl-[2px]") + (r % 2 === 1 ? " border-r border-r-[#d4d4d4]" : "") + (r === 5 && i === 16 ? " tracking-[0.22px]" : "")}>
                    {i === 9 && <div className="absolute left-0 top-0 w-0 h-0 border-t-[6px] border-r-[6px] border-t-[#007a1e] border-r-transparent" />}
                    {t}
                  </div>
                ))}
              </div>
            </div>
          ))}
          {/* Empty rows */}
          {Array.from({ length: 26 }, (_, i) => (
            <div key={i} className="flex h-[20px] shrink-0">
              <RowHead n={i + 13} />
              <EmptyCells />
            </div>
          ))}
        </div>
        {/* Vertical scrollbar */}
        <div className="w-[22px] flex flex-col items-center pt-[2px] pl-[1px] bg-[#e6e6e6]">
          <div className="w-[15px] h-[15px] shrink-0 bg-white border border-[#9f9f9f] flex items-center justify-center">
            <div className="w-0 h-0 border-l-[4px] border-r-[4px] border-b-[4px] border-l-transparent border-r-transparent border-b-black" />
          </div>
          <div className="w-[15px] flex-1 flex flex-col bg-[#f1f1f1] my-[1px]">
            <div className="h-[728px] bg-white border border-[#9f9f9f]" />
          </div>
          <div className="w-[15px] h-[14px] shrink-0 bg-white border border-[#9f9f9f] flex items-center justify-center">
            <div className="w-0 h-0 border-l-[4px] border-r-[4px] border-t-[4px] border-l-transparent border-r-transparent border-t-black" />
          </div>
        </div>
      </div>
      {/* Sheet tabs */}
      <div className="h-[27px] bg-[#e6e6e6] border-b border-b-[#c8c8c8] flex items-start shrink-0">
        <div className="w-[100px] h-full flex items-center pl-[27px] gap-[25px]">
          <div className="w-0 h-0 border-t-[4px] border-b-[4px] border-r-[4px] border-t-transparent border-b-transparent border-r-[#bbb]" />
          <div className="w-0 h-0 border-t-[4px] border-b-[4px] border-l-[4px] border-t-transparent border-b-transparent border-l-[#bbb]" />
        </div>
        <div className="w-[63px] h-[26px] bg-white border-x border-x-[#9f9f9f] border-b-2 border-b-[#217346] -mt-px pt-[2px] flex items-center justify-center text-[#217346] font-bold text-[13px] [font-family:Lato,sans-serif]">sheet1</div>
        <div className="ml-[34px] w-[16px] h-[16px] mt-[5px] rounded-full border border-[#c0c0c0] flex items-center justify-center text-[#bbb] text-[14px] leading-none">+</div>
        <div className="ml-[938px] w-[2px] h-[26px] flex flex-col justify-center gap-[2px]">
          <div className="w-[2px] h-[2px] bg-[#aaa]" /><div className="w-[2px] h-[2px] bg-[#aaa]" /><div className="w-[2px] h-[2px] bg-[#aaa]" />
        </div>
        <div className="ml-[15px] mt-[6px] w-[730px] h-[15px] bg-[#f1f1f1] flex">
          <div className="w-[15px] h-full bg-white border border-[#9f9f9f] flex items-center justify-center">
            <div className="w-0 h-0 border-t-[4px] border-b-[4px] border-r-[4px] border-t-transparent border-b-transparent border-r-black" />
          </div>
          <div className="w-[337px] h-full bg-white border border-[#9f9f9f] -ml-px" />
          <div className="flex-1" />
          <div className="w-[15px] h-full bg-white border border-[#9f9f9f] flex items-center justify-center">
            <div className="w-0 h-0 border-t-[4px] border-b-[4px] border-l-[4px] border-t-transparent border-b-transparent border-l-black" />
          </div>
        </div>
      </div>
      {/* Status bar */}
      <div className="h-[22px] bg-[#f3f3f3] border-b border-b-[#c8c8c8] flex items-center shrink-0 text-[#444]">
        <span className="ml-[11px] text-[11px] w-[32px]">Ready</span>
        <svg viewBox="0 0 16 16" className="ml-[18px] w-[16px] h-[16px]"><path d="M7 1a6.500 6.500 0 00-4 11.500" fill="none" stroke="#555" strokeDasharray="2 1" /><circle cx="9" cy="4" r="1.500" fill="#444" /><path d="M4 7h10M9 7v3l-3 5M9 10l4 5" stroke="#444" fill="none" /></svg>
        <span className="ml-[3px] text-[11px] font-semibold text-[#333] tracking-[-0.2px]">Accessibility: Investigate</span>
        <div className="ml-auto flex items-center h-full">
          <div className="w-[40px] h-full bg-[#c6c6c6] flex items-center justify-center">
            <svg viewBox="0 0 14 14" className="w-[14px] h-[14px]"><path d="M.5.500h13v13H.5zM.5 5h13M.5 9.500h13M5 .500v13M9.500.500v13" fill="none" stroke="#666" /></svg>
          </div>
          <div className="w-[40px] flex justify-center">
            <svg viewBox="0 0 14 14" className="w-[14px] h-[14px]"><rect x="1.500" y=".5" width="11" height="13" fill="none" stroke="#666" /><path d="M4 4h6M4 7h6M4 10h6" stroke="#666" /></svg>
          </div>
          <div className="w-[40px] flex justify-center">
            <svg viewBox="0 0 14 14" className="w-[14px] h-[14px]"><path d="M.5.500h13v13H.5zM.5 8.500h13M5 .500v8M9 .500v8" fill="none" stroke="#777" /></svg>
          </div>
          <div className="ml-[7px] w-[8px] h-px bg-[#444]" />
          <div className="ml-[5px] w-[100px] h-px bg-[#444] flex items-center justify-center">
            <div className="w-[5px] h-[11px] bg-[#555]" />
          </div>
          <div className="ml-[4px] text-[15px] leading-none text-[#444] w-[12px] text-center">+</div>
          <span className="ml-[9px] mr-[8px] text-[10.5px] text-[#555] w-[27px]">100%</span>
        </div>
      </div>
      {/* Taskbar */}
      <div className="h-[48px] shrink-0 bg-[#eeeeee] flex items-center text-[#222]">
        <div className="w-[661px] flex items-center pl-[21px] h-full shrink-0">
          <div className="relative w-[23px] h-[24px]">
            <svg viewBox="0 0 23 24" className="w-[23px] h-[24px]">
              <circle cx="11" cy="10" r="10" fill="#f29a1f" />
              <path d="M4 23a5 5 0 010-10 7 7 0 0113 1 4.500 4.500 0 012 9z" fill="#bcd6f2" stroke="#8fb7e2" strokeWidth=".6" />
            </svg>
            <div className="absolute left-[9px] -top-[8px] w-[16px] h-[16px] rounded-full bg-[#c42b1c] text-white text-[10px] flex items-center justify-center">4</div>
          </div>
          <div className="ml-[6px] flex flex-col leading-[16px] text-[11.5px] tracking-[-0.1px]">
            <span>32°C</span>
            <span className="text-[#666]">Partly sunny</span>
          </div>
        </div>
        <WinLogo />
        <div className="ml-[14px] w-[218px] h-[30px] rounded-full bg-[#fbfbfb] border border-[#d8d8d8] flex items-center pl-[10px] pr-[5px] shrink-0">
          <svg viewBox="0 0 15 16" className="w-[15px] h-[16px]"><circle cx="6.500" cy="6.500" r="5.500" fill="none" stroke="#222" strokeWidth="1.300" /><path d="M10.500 11l3.500 4" stroke="#222" strokeWidth="1.300" /></svg>
          <span className="ml-[10px] text-[12.5px] text-[#555]">Search</span>
          <svg viewBox="0 0 46 28" className="ml-auto w-[46px] h-[28px]">
            <path d="M1 10c3-1 6-1 8 0v13c-2-1-5-1-8 0zM9 10c3-1 5-1 7 0v13c-2-1-5-1-7 0z" fill="#e9d8bd" stroke="#9a8a75" strokeWidth=".7" />
            <rect x="17" y="7" width="12" height="20" rx="2" fill="#5fbcb8" />
            <path d="M20 7V1h6v6" fill="none" stroke="#8b8b8b" />
            <ellipse cx="38" cy="16" rx="8" ry="5.500" fill="#d9a852" />
            <ellipse cx="38" cy="14" rx="4.500" ry="3.500" fill="#eac47f" />
          </svg>
        </div>
        <div className="ml-[3px] flex items-center">
          <TaskIcon>
            <svg viewBox="0 0 24 23" className="w-[24px] h-[23px]"><defs><linearGradient id="t1" x1="0" y1="0" x2="1" y2="1"><stop offset="0" stopColor="#fafafa" /><stop offset="1" stopColor="#a8a8a8" /></linearGradient></defs><rect x="7" y="0" width="17" height="15" rx="1" fill="#f8f8f8" stroke="#e2e2e2" /><rect x="0" y="7" width="18" height="16" rx="1" fill="#222" /><rect x="7" y="5" width="11" height="12" fill="url(#t1)" /></svg>
          </TaskIcon>
          <TaskIcon>
            <svg viewBox="0 0 24 24" className="w-[24px] h-[24px]"><defs><linearGradient id="c1" x1="0" y1="0" x2="1" y2="1"><stop offset="0" stopColor="#2a9df5" /><stop offset=".45" stopColor="#8a5cf5" /><stop offset="1" stopColor="#f5718f" /></linearGradient><linearGradient id="c2" x1="0.300" y1="0" x2="0.300" y2="1"><stop offset="0" stopColor="#1c9bf5" /><stop offset=".55" stopColor="#4fc96f" /><stop offset="1" stopColor="#f7c948" /></linearGradient></defs><path d="M8 1h7c2 0 2 2 1 4l-5 14c-1 3-2 4-5 4-4 0-5.500-3-4.500-6 1-4 3-12 6.500-16z" fill="url(#c2)" /><path d="M17 23h-7c-2 0-2-2-1-4L14 5c1-3 2-4 5-4 4 0 5.500 3 4.500 6-1 4-3 12-6.500 16z" fill="url(#c1)" /></svg>
          </TaskIcon>
          <TaskIcon dot>
            <svg viewBox="0 0 24 24" className="w-[24px] h-[24px]"><path d="M0 3a1 1 0 011-1h8l2 3h13v17H0z" fill="#d9a21f" /><path d="M0 6h24v17H0z" fill="#fcd35c" /><rect x="6" y="15" width="12" height="8" rx="1" fill="#2f8ed1" /></svg>
          </TaskIcon>
          <TaskIcon>
            <svg viewBox="0 0 24 24" className="w-[24px] h-[24px]"><defs><linearGradient id="e1" x1="0" y1="0" x2="0.600" y2="1"><stop offset="0" stopColor="#1b9de2" /><stop offset="1" stopColor="#0c59a4" /></linearGradient><linearGradient id="e2" x1="0" y1="0" x2="1" y2="0.600"><stop offset="0" stopColor="#2dc0d8" /><stop offset="1" stopColor="#5fd97c" /></linearGradient></defs><circle cx="12" cy="12" r="12" fill="url(#e1)" /><path d="M0.600 11C3 4 8 0 13 0c7 0 11 6 11 12 0 4-4 5.500-7.500 4.500 2-1.500 3-3.500 2-6-2-4.500-9-5.500-13-2.500-2 1-4 2-5.400 3z" fill="url(#e2)" /><path d="M10 14.500c0-2.500 3-4 6-3 2 1 2.500 3.500 1 5-2.500 1-6 .5-7-2z" fill="#eeeeee" /></svg>
          </TaskIcon>
          <TaskIcon>
            <svg viewBox="0 0 24 24" className="w-[23px] h-[24px]"><path d="M7 6V2h10v4" fill="none" stroke="#1c8bf5" strokeWidth="1.800" /><path d="M1 5h22v17a2 2 0 01-2 2H3a2 2 0 01-2-2z" fill="#1a4a7a" /><rect x="7.500" y="9" width="4" height="4" fill="#f25022" /><rect x="12.500" y="9" width="4" height="4" fill="#7fba00" /><rect x="7.500" y="14" width="4" height="4" fill="#00a4ef" /><rect x="12.500" y="14" width="4" height="4" fill="#ffb900" /></svg>
          </TaskIcon>
          <TaskIcon>
            <svg viewBox="0 0 24 18" className="w-[24px] h-[18px]"><rect width="24" height="18" rx="4" fill="#f00" /><path d="M9.500 5l6.500 4-6.500 4z" fill="#fff" /></svg>
          </TaskIcon>
          <TaskIcon dot>
            <svg viewBox="0 0 24 24" className="w-[24px] h-[24px]"><circle cx="12" cy="12" r="12" fill="#34a853" /><path d="M12 0a12 12 0 0110.400 6H12z" fill="#ea4335" /><path d="M22.400 6A12 12 0 0112 24l5-9z" fill="#fbbc05" /><path d="M2 6a12 12 0 0110-6v6z" fill="#ea4335" /><circle cx="12" cy="12" r="5.500" fill="#fff" /><circle cx="12" cy="12" r="4.300" fill="#4285f4" /></svg>
            <div className="absolute right-[3px] top-[2px] w-[16px] h-[16px] rounded-full bg-[#0b8a96] text-white text-[9px] flex items-center justify-center">$</div>
          </TaskIcon>
          <TaskIcon active>
            <div className="absolute inset-y-0 left-[7px] w-[34px] bg-[#f8f8f8] rounded-[3px] border-r-[2px] border-r-[#e0e0e0]" />
            <svg viewBox="0 0 24 24" className="w-[24px] h-[24px] relative"><rect x="6" y="1" width="18" height="22" rx="1" fill="#21a366" /><rect x="15" y="1" width="9" height="7.300" fill="#33c481" /><rect x="6" y="8.300" width="9" height="7.300" fill="#107c41" /><rect x="15" y="15.600" width="9" height="7.400" fill="#185c37" /><rect x="6" y="15.600" width="9" height="7.400" fill="#185c37" /><rect x="0" y="6" width="13" height="13" rx="1" fill="#107c41" /><text x="3" y="16" fontSize="11" fontWeight="700" fill="#fff" fontFamily="Liberation Sans">X</text></svg>
          </TaskIcon>
        </div>
        <div className="ml-auto flex items-center pr-[20px]">
          <svg viewBox="0 0 12 7" className="w-[11px] h-[7px]"><path d="M1 6l5-5 5 5" fill="none" stroke="#222" strokeWidth="1.200" /></svg>
          <svg viewBox="0 0 18 14" className="ml-[17px] w-[17px] h-[13px]"><path d="M4 13a3.500 3.500 0 010-7 5 5 0 019-1 4 4 0 011 8z" fill="#555" /><path d="M2 1l14 12" stroke="#eee" strokeWidth="2.500" /><path d="M2 1l14 12" stroke="#222" /></svg>
          <div className="ml-[18px] w-[26px] flex flex-col items-center text-[11.5px] leading-[16px]"><span>ENG</span><span>IN</span></div>
          <svg viewBox="0 0 17 20" className="ml-[17px] w-[16px] h-[20px]"><rect x=".5" y="2" width="11" height="11" fill="none" stroke="#333" /><path d="M6 13v3M3 16.500h6" stroke="#333" fill="none" /><rect x="12.500" y=".5" width="3.500" height="6" fill="none" stroke="#333" /><path d="M14.250 6.500V17" stroke="#333" /></svg>
          <svg viewBox="0 0 17 16" className="ml-[8px] w-[16px] h-[15px]"><path d="M1 6h3l4-4v12l-4-4H1z" fill="none" stroke="#333" /><path d="M10 5a4 4 0 010 6M12 3a7 7 0 010 10M14 1.500a9.500 9.500 0 010 13" fill="none" stroke="#333" /></svg>
          <div className="ml-[16px] flex flex-col items-end text-[11.5px] leading-[16px]"><span>15:51</span><span>19-04-2025</span></div>
        </div>
      </div>
    </div>
  );
}
